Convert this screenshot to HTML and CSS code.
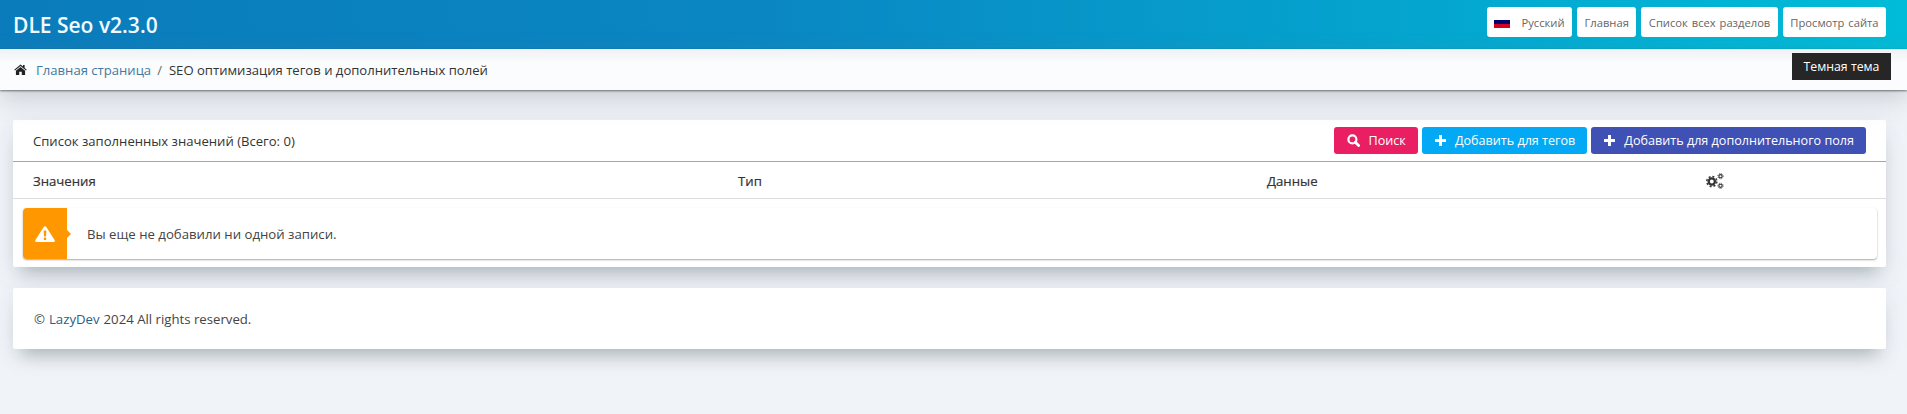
FILE: index.html
```html
<!DOCTYPE html>
<html lang="en">
<head>
    <meta charset="UTF-8">
    <meta name="viewport" content="width=device-width, initial-scale=1.0">
    <title>DLE Seo</title>
    <link rel="stylesheet" href="styles.css">
</head>
<body>
    <header class="topbar">
        <div class="brand">DLE Seo v2.3.0</div>
        <nav class="topnav">
            <a class="nav-btn lang-btn">
                <svg class="flag" width="16" height="12" viewBox="0 0 16 12"><rect width="16" height="4" fill="#fff"/><rect y="4" width="16" height="4" fill="#00006f"/><rect y="8" width="16" height="4" fill="#d5001f"/></svg>
                Русский
            </a>
            <a class="nav-btn">Главная</a>
            <a class="nav-btn">Список всех разделов</a>
            <a class="nav-btn">Просмотр сайта</a>
        </nav>
    </header>
    <div class="crumbs">
        <svg class="home-icon" width="13" height="11" viewBox="0 0 14 12"><path d="M7 0.6 0.2 6.3l.8.9L7 2.3l6 4.9.8-.9-2.3-1.9V1h-1.8v1.8z"/><path d="M7 3.3 2 7.4V12h3.6V8.4h2.8V12H12V7.4z"/></svg>
        <a class="crumb-link">Главная страница</a>
        <span class="crumb-sep">/</span>
        <span>SEO оптимизация тегов и дополнительных полей</span>
        <button class="theme-btn">Темная тема</button>
    </div>
    <main class="content">
        <section class="card list-card">
            <div class="card-head">
                <div class="card-title">Список заполненных значений (Всего: 0)</div>
                <div class="actions">
                    <a class="btn btn-pink">
                        <svg width="13" height="13" viewBox="0 0 13 13"><circle cx="5.400" cy="5.400" r="4" fill="none" stroke="#fff" stroke-width="2.200"/><path d="M8.300 8.300 11.600 11.600" stroke="#fff" stroke-width="2.800" stroke-linecap="round"/></svg>
                        Поиск
                    </a>
                    <a class="btn btn-blue">
                        <svg width="11" height="11" viewBox="0 0 11 11"><path d="M4 0h3v4h4v3H7v4H4V7H0V4h4z" fill="#fff"/></svg>
                        Добавить для тегов
                    </a>
                    <a class="btn btn-indigo">
                        <svg width="11" height="11" viewBox="0 0 11 11"><path d="M4 0h3v4h4v3H7v4H4V7H0V4h4z" fill="#fff"/></svg>
                        Добавить для дополнительного поля
                    </a>
                </div>
            </div>
            <div class="table-head">
                <div>Значения</div>
                <div>Тип</div>
                <div>Данные</div>
                <div>
                    <svg class="cogs" width="18" height="16" viewBox="0 0 18 16" fill="none" stroke="#333">
                        <circle cx="5.800" cy="8.500" r="3.100" stroke-width="2.300"/>
                        <circle cx="5.800" cy="8.500" r="5" stroke-width="1.500" stroke-dasharray="2 1.930"/>
                        <circle cx="14.500" cy="3.200" r="1.600" stroke-width="1.100"/>
                        <circle cx="14.500" cy="3.200" r="2.600" stroke-width="1" stroke-dasharray="1 1.040"/>
                        <circle cx="14.500" cy="12.800" r="1.600" stroke-width="1.100"/>
                        <circle cx="14.500" cy="12.800" r="2.600" stroke-width="1" stroke-dasharray="1 1.040"/>
                    </svg>
                </div>
            </div>
            <div class="alert">
                <div class="alert-icon">
                    <svg width="20" height="16" viewBox="0 0 20 16"><path d="M8.900 .8c.5-.8 1.700-.8 2.200 0l8.500 13.200c.5.800 0 2-1.100 2H1.500C.4 16-.1 14.800.4 14z" fill="#fff"/><path d="M8.700 4.500h2.600l-.3 6H9z" fill="#ff9800"/><rect x="8.800" y="11.600" width="2.400" height="2.400" fill="#ff9800"/></svg>
                </div>
                <div class="alert-text">Вы еще не добавили ни одной записи.</div>
            </div>
        </section>
        <footer class="card page-foot">
            © <a class="foot-link">LazyDev</a> 2024 All rights reserved.
        </footer>
    </main>
</body>
</html>
```

FILE: styles.css
```css
* { box-sizing: border-box; }
html, body { height: 100%; }
body { margin: 0; background-color: #f0f3f8; font-family: "Open Sans", "Noto Sans", sans-serif; font-size: 13px; color: #333; overflow: hidden; }

.topbar { height: 49px; display: flex; align-items: center; justify-content: space-between; padding: 0 21px 0 13px; background: linear-gradient(90deg, #0a7cbc 0%, #0a87c3 40%, #00bcd8 100%); }
.brand { font-size: 21px; font-weight: 600; color: #f2fbff; }
.topnav { display: flex; gap: 5px; margin-top: -5px; }
.nav-btn { height: 30px; display: flex; align-items: center; padding: 0 7.500px; gap: 11px; background-color: #fff; border-radius: 3px; font-size: 11.200px; word-spacing: 1px; color: #666; }

.crumbs { position: relative; height: 41px; display: flex; align-items: center; padding-left: 14px; background: linear-gradient(#eff1f4, #fbfcfe 35%); box-shadow: 0 1px 2px rgba(0, 0, 0, 0.5), 0 8px 24px rgba(110, 120, 125, 0.3); color: #333; font-size: 13.100px; }
.home-icon { margin-right: 9px; fill: #222; }
.crumb-link { color: #43799f; }
.crumb-sep { margin: 0 7px 0 6px; color: #666; }
.theme-btn { position: absolute; top: 4px; right: 16px; height: 27px; width: 99px; padding: 0; border: none; background-color: #262626; color: #fff; font: inherit; font-size: 12.300px; }

.content { padding: 30px 21px 0 13px; }
.card { background-color: #fff; border-radius: 2px; box-shadow: 0 14px 18px -8px rgba(110, 125, 125, 0.5), 0 0 20px rgba(205, 212, 225, 0.35); }
.list-card { height: 147px; margin-bottom: 21px; }
.card-head { height: 42px; display: flex; align-items: center; justify-content: space-between; padding: 0 20px; border-bottom: 1px solid #a6a6a6; }
.card-title { color: #333; font-size: 13.100px; }
.actions { display: flex; gap: 4px; margin-top: -1px; }
.btn { height: 27px; display: flex; align-items: center; gap: 9px; padding: 0 12px 0 13px; border-radius: 3px; color: #fff; font-size: 12.600px; }
.btn-pink { background-color: #e91e63; }
.btn-blue { background-color: #03a9f4; }
.btn-indigo { background-color: #3f51b5; }

.table-head { height: 37px; display: grid; grid-template-columns: 705px 529px 439px 1fr; align-items: center; border-bottom: 1px solid #ddd; font-size: 13.200px; font-weight: 500; color: #333; -webkit-text-stroke: 0.2px #333; }
.table-head > div { padding-left: 20px; padding-top: 1px; }
.cogs { display: block; }

.alert { display: flex; align-items: center; height: 51px; margin: 9px 9px 0 10px; border-radius: 4px; background-color: #fff; box-shadow: 0 1px 2px rgba(0, 0, 0, 0.35); }
.alert-icon { position: relative; width: 44px; height: 100%; display: flex; align-items: center; justify-content: center; background-color: #ff9800; border-radius: 4px 0 0 4px; }
.alert-icon::after { content: ""; position: absolute; left: 100%; top: 50%; margin-top: -4px; border-left: 4px solid #ff9800; border-top: 4px solid transparent; border-bottom: 4px solid transparent; }
.alert-text { padding-left: 20px; color: #444; font-size: 13.200px; }

.page-foot { height: 61px; display: flex; align-items: center; gap: 4px; padding-left: 21px; color: #444; font-size: 13.200px; }
.foot-link { color: #2a5f86; }
```
